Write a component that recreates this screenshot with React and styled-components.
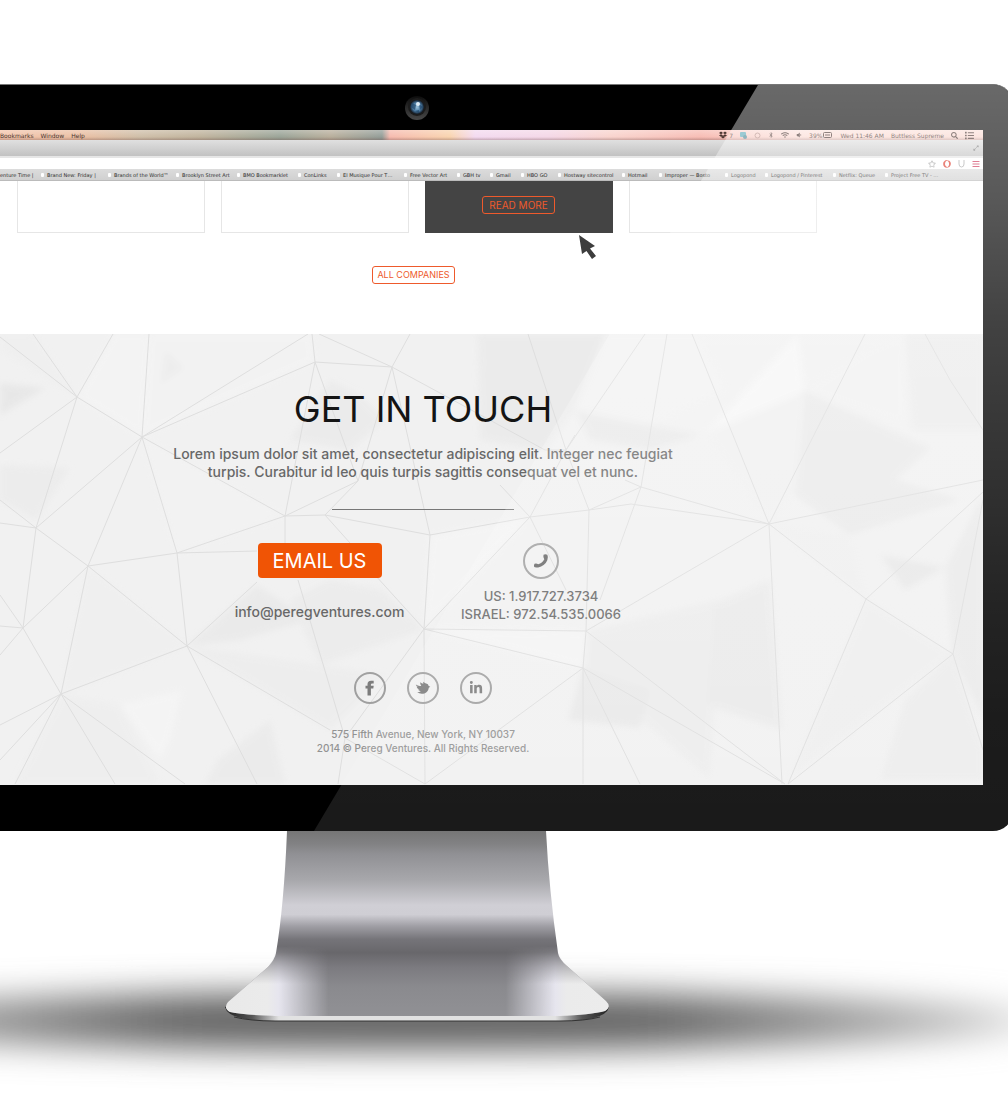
import React from "react";
import styled, { createGlobalStyle, css } from "styled-components";
import { FaLinkedinIn, FaDropbox, FaBluetoothB, FaWifi, FaVolumeDown, FaSearch, FaList, FaRegStar, FaOpera, FaBars, FaExpandAlt } from "react-icons/fa";

const GlobalStyle = createGlobalStyle`
  * { box-sizing: border-box; }
  body { margin: 0; background: #fff; font-family: Inter, "Open Sans", sans-serif; }
  h1, p, ul { margin: 0; padding: 0; }
  button, input { font: inherit; }
`;

const Page = styled.main`
  padding-top: 84px;
  overflow: hidden;
`;

const Scene = styled.div`
  margin: 0 -5px 0 -180px;
`;

const Monitor = styled.div`
  position: relative;
  display: flex;
  flex-direction: column;
  padding: 0 30px 46px;
  background: #000;
  border-radius: 20px;
  border-top: 1px solid #777;
  overflow: hidden;
`;

const Glare = styled.div`
  position: absolute;
  inset: 0;
  pointer-events: none;
  clip-path: polygon(938px 0, 100% 0, 100% 100%, 494px 100%);
  background: linear-gradient(
    rgba(255, 255, 255, 0.41), rgba(255, 255, 255, 0.35) 15%, rgba(255, 255, 255, 0.26) 32%,
    rgba(255, 255, 255, 0.14) 70%, rgba(255, 255, 255, 0.11) 85%, rgba(255, 255, 255, 0.1)
  );
`;

const CameraRow = styled.div`
  display: flex;
  align-items: center;
  justify-content: center;
  height: 45px;
`;

const Screen = styled.div`
  display: flex;
  flex-direction: column;
  background: #fff;
`;

const MenuBar = styled.div`
  display: flex;
  align-items: center;
  justify-content: space-between;
  height: 10px;
  padding: 0 9px 0 150px;
  color: #4a3530;
  font: 6px "DejaVu Sans", sans-serif;
  background:
    linear-gradient(rgba(255, 255, 255, 0.35), rgba(255, 255, 255, 0.1) 70%, rgba(120, 90, 90, 0.35)),
    linear-gradient(90deg, #f2bfa3 150px, #e8b899 230px, #c9b79e 290px, #b9ab92 350px, #8f9a8c 430px, #b0a590 480px,
      #87928c 532px, #f5b3a6 540px, #f8cfa6 600px, #f2d6ee 625px, #f3d3e4 700px, #f8cfc8 760px, #f6b5ac 850px, #fbd5cc 950px, #f8d0c6);
`;

const MenuGroup = styled.div`
  display: flex;
  align-items: center;
  gap: ${(p) => p.$gap}px;
  white-space: nowrap;
  svg { display: block; }
`;

const TitleStrip = styled.div`
  display: flex;
  align-items: center;
  justify-content: flex-end;
  height: 16px;
  padding-right: 4px;
  color: #777;
  background: linear-gradient(#e0e0e0, #c2c2c2);
`;

const AddressBar = styled.div`
  display: flex;
  align-items: center;
  gap: 7px;
  height: 13px;
  padding-right: 3px;
  border-top: 2px solid #e6e6e6;
  background: #fff;
  color: #999;
`;

const Address = styled.input`
  flex: 1;
  min-width: 0;
  height: 10px;
  padding: 0;
  border: 0;
  background: #fff;
`;

const Bookmarks = styled.nav`
  display: grid;
  grid-template-columns: 191px 67px 68px 61px 61px 39px 67px 53px 33px 31px 37px 64px 37px 66px 40px 68px 52px 1fr;
  align-items: center;
  height: 12px;
  border-bottom: 1px solid #bbb;
  background: linear-gradient(#dcdcdc, #d0d0d0);
`;

const Bookmark = styled.a`
  display: flex;
  align-items: center;
  gap: 3px;
  color: #2c2c2c;
  font: 5px "DejaVu Sans", sans-serif;
  white-space: nowrap;
  text-decoration: none;
  &::before {
    content: "";
    width: 3px;
    height: 4px;
    border-radius: 1px;
    background: #fff;
  }
  &:first-child { padding-left: 150px; }
  &:first-child::before { display: none; }
`;

const Companies = styled.section`
  display: flex;
  flex-direction: column;
  align-items: center;
  padding-bottom: 50px;
`;

const CardRow = styled.div`
  display: grid;
  grid-template-columns: repeat(4, 188px);
  gap: 16px;
`;

const Card = styled.div`
  position: relative;
  display: flex;
  align-items: flex-start;
  justify-content: center;
  height: 52px;
  padding-top: 15px;
  border: 1px solid #e6e6e6;
  border-top: 0;
  ${(p) => p.$dark && css`
    background: #444;
    border-color: #444;
  `}
`;

const Pointer = styled.svg`
  position: absolute;
  left: 152px;
  top: 53px;
`;

const OutlineButton = styled.button`
  height: 18px;
  padding: 0 ${(p) => p.$pad}px;
  border: 1px solid #ee5a2c;
  border-radius: 3px;
  background: transparent;
  color: #ee5a2c;
  font-size: ${(p) => p.$size}px;
  line-height: 16px;
  white-space: nowrap;
`;

const AllCompanies = styled.div`
  margin-top: 33px;
  padding-right: 6px;
  display: flex;
`;

const Contact = styled.section`
  position: relative;
  display: flex;
  flex-direction: column;
  align-items: center;
  padding: 53px 0 30px 13px;
  background: #f1f1f1;
  text-align: center;
  color: #686868;
`;

const Backdrop = styled.svg`
  position: absolute;
  inset: 0;
  width: 100%;
  height: 100%;
`;

const Title = styled.h1`
  position: relative;
  color: #141414;
  font-size: 36px;
  font-weight: 400;
  line-height: 44px;
`;

const Lead = styled.p`
  position: relative;
  margin-top: 14px;
  font-size: 14px;
  font-weight: 500;
  line-height: 18px;
`;

const Divider = styled.div`
  position: relative;
  width: 182px;
  height: 1px;
  margin-top: 28px;
  background: #777;
`;

const Channels = styled.div`
  position: relative;
  display: grid;
  grid-template-columns: 167px 162px;
  gap: 57px;
  margin-top: 33px;
  padding-left: 12px;
`;

const Channel = styled.div`
  display: flex;
  flex-direction: column;
  align-items: center;
  gap: ${(p) => p.$gap}px;
  font-size: ${(p) => p.$size}px;
  font-weight: 500;
  line-height: 18px;
  white-space: nowrap;
`;

const EmailButton = styled.button`
  width: 124px;
  height: 35px;
  padding: 0;
  border: 0;
  border-radius: 4px;
  background: #f05405;
  color: #fff;
  font-size: 20px;
  font-weight: 400;
`;

const TextLink = styled.a`
  display: block;
  color: inherit;
  text-decoration: none;
`;

const Ring = styled.a`
  display: flex;
  align-items: center;
  justify-content: center;
  width: ${(p) => p.$size}px;
  height: ${(p) => p.$size}px;
  border: 2px solid #a0a0a0;
  border-radius: 50%;
  color: #7c7c7c;
`;

const Social = styled.nav`
  position: relative;
  display: flex;
  gap: 21px;
  margin-top: 49px;
`;

const Legal = styled.p`
  position: relative;
  margin-top: 23px;
  color: #939393;
  font-size: 10px;
  font-weight: 500;
  line-height: 14px;
`;

const Stand = styled.svg`
  display: block;
  width: 100%;
  height: 278px;
`;

const bookmarks = ["enture Time |", "Brand New: Friday |", "Brands of the World™", "Brooklyn Street Art", "BMO Bookmarklet", "ConLinks", "El Musique Pour T…", "Free Vector Art", "GBH tv", "Gmail", "HBO GO", "Hostway sitecontrol", "Hotmail", "Improper — Bosto", "Logopond", "Logopond / Pinterest", "Netflix: Queue", "Project Free TV - …"];

const facets = [
  ["0,383 45,388 0,415", "#e2e2e2"],
  ["0,334 33,334 77,397 0,350", "#eeeeee"],
  ["0,465 70,468 36,520 0,500", "#e9e9e9"],
  ["113,334 149,334 142,437 77,397", "#f5f5f5"],
  ["149,334 312,334 315,362 142,437", "#f4f4f4"],
  ["165,350 185,368 160,385", "#ececec"],
  ["142,437 285,516 177,553", "#f3f3f3"],
  ["88,566 187,646 61,694", "#eeeeee"],
  ["187,646 257,585 310,620 240,640", "#e6e6e6"],
  ["290,600 330,580 382,590 424,629 320,665", "#e9e9e9"],
  ["187,646 320,665 385,675 330,730", "#ebebeb"],
  ["120,705 182,690 170,740 160,760", "#f7f7f7"],
  ["218,760 270,720 285,784 205,784", "#e8e8e8"],
  ["61,694 120,705 160,784 15,784", "#ededed"],
  ["330,380 360,395 385,420 350,450 290,440", "#e8e8e8"],
  ["478,334 605,334 575,410 545,450 480,440", "#e8e8e8"],
  ["575,410 650,425 700,435 650,450 590,440", "#e5e5e5"],
  ["605,334 700,334 725,390 650,425 575,410", "#f3f3f3"],
  ["798,334 735,402 705,433 804,391", "#fafafa"],
  ["804,391 930,448 895,480 960,500 850,535 795,495", "#e6e6e6"],
  ["804,391 865,350 905,334 905,425", "#f2f2f2"],
  ["905,334 983,334 983,430 912,430", "#e9e9e9"],
  ["705,433 804,391 795,495 769,524", "#f0f0f0"],
  ["769,524 850,535 866,599", "#eeeeee"],
  ["880,555 945,567 905,590", "#e3e3e3"],
  ["945,567 983,495 983,720 953,654", "#e6e6e6"],
  ["586,631 720,600 710,780 583,668", "#eaeaea"],
  ["712,605 770,580 782,730 705,705", "#e7e7e7"],
  ["583,668 650,690 640,728 568,720", "#e4e4e4"],
  ["424,629 586,631 583,668", "#f7f7f7"],
  ["430,535 530,517 424,629", "#f7f7f7"],
  ["866,599 953,654 788,780", "#ededed"],
  ["953,654 905,700 880,780 983,780 983,750", "#e9e9e9"],
];

const strands =
  "M77 397L0 337M77 397L33 334M77 397L113 334M77 397L0 453M77 397L36 528M77 397L142 437" +
  "M142 437L149 334M142 437L308 334M142 437L315 362M142 437L285 516M142 437L36 528M142 437L88 566M142 437L177 553" +
  "M177 553L187 646M177 553L285 516M177 553L257 551M177 553L88 566M36 528L0 500M36 528L0 523M36 528L88 566M36 528L23 628" +
  "M88 566L23 628M88 566L61 694M88 566L187 646M23 628L0 595M23 628L0 655M23 628L0 626M23 628L61 694" +
  "M61 694L187 646M61 694L0 725M61 694L0 760M61 694L15 784M61 694L115 784M61 694L185 784" +
  "M187 646L257 784M187 646L330 730M187 646L257 582M298 580L345 738" +
  "M312 334L315 362L392 367L410 334M319 334L392 367M315 362L358 481M392 367L358 481L285 516L325 515L358 481M315 362L285 516L285 545" +
  "M392 367L430 535M392 367L545 450L566 450M325 515L430 535L424 629M325 515L350 543M430 535L530 517L424 629M375 575L424 629" +
  "M424 629L345 738L338 784M345 738L425 784M424 629L425 784M424 629L586 631M424 629L583 668M583 668L425 784" +
  "M530 517L500 485M530 517L566 450L575 435M530 517L589 510L631 504L769 524M530 517L566 590M589 510L641 487L769 524" +
  "M528 334L566 450L589 510L586 631M645 334L566 450M667 334L641 487L600 600M625 480L641 487M692 334L769 524L865 334" +
  "M769 524L983 480M769 524L586 631L583 668L583 784M769 524L782 784M769 524L866 599L983 492M866 599L953 654L983 500" +
  "M866 599L788 784L953 654L983 750M583 668L640 784M583 668L785 784L586 631M925 334L950 380L983 430";

function PhoneIcon() {
  return (
    <svg width="16" height="16" viewBox="0 0 16 16" aria-hidden="true">
      <path d="M10.500 1.800Q12.300 .8 14.300 1.800Q15.600 4.200 14.300 7.200C12.600 11 9.300 13.700 5.200 14.400Q2.300 14.900 1.200 14.100Q.6 12.300 1.500 10.800Q3.300 9.900 5.200 11.200Q9.300 10.300 11.300 6.200Q9.900 4.200 10.500 1.800Z" fill="#686868" />
    </svg>
  );
}

function FacebookIcon() {
  return (
    <svg width="10" height="16" viewBox="0 0 10 16" aria-hidden="true">
      <path d="M2.500 15.500V8.500H.5V5.800H2.500V4.200Q2.500.7 6 .7H8.700V3.400H7.200Q5.900 3.400 5.900 4.500V5.800H8.700L8.300 8.500H5.900V15.500Z" fill="currentColor" />
    </svg>
  );
}

function BirdIcon() {
  return (
    <svg width="16" height="14" viewBox="0 0 16 14" aria-hidden="true">
      <path d="M.8 3.500Q3.500 5.500 6.300 4.800Q5 3.200 5.200 1.200Q6.600 2.500 8.300 2.700Q8 1.500 8.500.8Q9.800 2.200 11.200 2.600Q13.300 3 13.700 5L15.300 5.800L13.800 6.800Q13.300 10.500 10 12.200Q5.500 13.700 2.200 11.300Q4.500 11.300 5.800 10.200Q3.600 10 3 8.600H4.500Q2.100 7.600 1.600 5.700L2.900 6Q1.200 5.200.8 3.500Z" fill="currentColor" />
    </svg>
  );
}

function ContactChannels() {
  return (
    <Channels>
      <Channel $gap={25} $size={14}>
        <EmailButton type="button">EMAIL US</EmailButton>
        <TextLink href="mailto:info@peregventures.com">info@peregventures.com</TextLink>
      </Channel>
      <Channel $gap={8} $size={13}>
        <Ring $size={36} href="tel:19177273734" aria-label="Call us">
          <PhoneIcon />
        </Ring>
        <div>
          <TextLink href="tel:19177273734">US: 1.917.727.3734</TextLink>
          <TextLink href="tel:972545350066">ISRAEL: 972.54.535.0066</TextLink>
        </div>
      </Channel>
    </Channels>
  );
}

function Camera() {
  return (
    <svg width="26" height="26" viewBox="0 0 26 26" aria-hidden="true">
      <defs>
        <radialGradient id="lens">
          <stop offset="0" stopColor="#9cc4de" />
          <stop offset="0.6" stopColor="#4d7da5" />
          <stop offset="1" stopColor="#14202e" />
        </radialGradient>
        <linearGradient id="rim" x1="0" y1="0" x2="0" y2="1">
          <stop offset="0" stopColor="#0c0c0c" />
          <stop offset="1" stopColor="#484848" />
        </linearGradient>
      </defs>
      <circle cx="13" cy="13" r="12" fill="url(#rim)" />
      <circle cx="13" cy="12" r="9" fill="#1c1c1c" />
      <circle cx="13" cy="12" r="7" fill="url(#lens)" />
      <path d="M8 8l4 2-1 5-4-3zM15 9l4 3-3 3zM11 16l4-1 0 3z" fill="#1f4468" opacity=".7" />
      <circle cx="14" cy="9" r="2" fill="#dceaf5" />
    </svg>
  );
}

function MonitorStand() {
  return (
    <Stand viewBox="-180 831 1193 278" preserveAspectRatio="xMidYMin slice" aria-hidden="true">
      <defs>
        <linearGradient id="metal" gradientUnits="userSpaceOnUse" x1="0" y1="831" x2="0" y2="1021">
          <stop offset="0" stopColor="#767676" />
          <stop offset="0.07" stopColor="#828284" />
          <stop offset="0.12" stopColor="#909094" />
          <stop offset="0.26" stopColor="#a8a8ac" />
          <stop offset="0.39" stopColor="#d0cfd5" />
          <stop offset="0.44" stopColor="#cfced4" />
          <stop offset="0.5" stopColor="#a09fa5" />
          <stop offset="0.57" stopColor="#757479" />
          <stop offset="0.64" stopColor="#68676b" />
          <stop offset="0.72" stopColor="#7c7b80" />
          <stop offset="0.82" stopColor="#8a8a8e" />
          <stop offset="1" stopColor="#929296" />
        </linearGradient>
        <linearGradient id="flare" gradientUnits="userSpaceOnUse" x1="225" y1="0" x2="609" y2="0">
          <stop offset="0" stopColor="#e9e9e9" />
          <stop offset="0.11" stopColor="#ebebeb" />
          <stop offset="0.14" stopColor="#e6e5ee" />
          <stop offset="0.27" stopColor="#e6e5ee" stopOpacity="0" />
          <stop offset="0.73" stopColor="#e6e5ee" stopOpacity="0" />
          <stop offset="0.86" stopColor="#e6e5ee" />
          <stop offset="0.89" stopColor="#ebebeb" />
          <stop offset="1" stopColor="#ececec" />
        </linearGradient>
        <linearGradient id="fade" gradientUnits="userSpaceOnUse" x1="0" y1="946" x2="0" y2="984">
          <stop offset="0" stopColor="#000" />
          <stop offset="1" stopColor="#fff" />
        </linearGradient>
        <mask id="lower" maskUnits="userSpaceOnUse" x="200" y="830" width="430" height="200">
          <rect x="200" y="830" width="430" height="200" fill="url(#fade)" />
        </mask>
        <linearGradient id="lip" gradientUnits="userSpaceOnUse" x1="225" y1="0" x2="609" y2="0">
          <stop offset="0" stopColor="#222" />
          <stop offset="0.07" stopColor="#555" />
          <stop offset="0.14" stopColor="#e2e2e2" />
          <stop offset="0.86" stopColor="#e2e2e2" />
          <stop offset="0.93" stopColor="#555" />
          <stop offset="1" stopColor="#222" />
        </linearGradient>
        <linearGradient id="floor" gradientUnits="userSpaceOnUse" x1="-180" y1="0" x2="1013" y2="0">
          <stop offset="0" stopColor="#bbb" />
          <stop offset="0.3" stopColor="#636363" />
          <stop offset="0.7" stopColor="#636363" />
          <stop offset="1" stopColor="#c4c4c4" />
        </linearGradient>
        <filter id="haze" x="-20%" y="-200%" width="140%" height="500%">
          <feGaussianBlur stdDeviation="30 17" />
        </filter>
      </defs>
      <ellipse cx="416" cy="1021" rx="620" ry="29" fill="url(#floor)" filter="url(#haze)" />
      <path d="M225 1007Q228 1021 275 1021H560Q606 1021 609 1007L590 1000H245Z" fill="url(#lip)" />
      <path d="M234 1017Q250 1021 275 1021H560Q585 1021 600 1017" fill="none" stroke="#333" />
      <path d="M287 831Q284 905 276 953Q275 959 268 967L228 1002Q223 1008 230 1012Q245 1015 275 1016H560Q590 1015 605 1011Q612 1007 606 1001L567 966Q559 959 558 953Q549 890 546 831Z" fill="url(#metal)" />
      <g mask="url(#lower)">
        <path d="M276 945Q275 959 268 967L228 1002Q223 1008 230 1012Q245 1015 275 1016H560Q590 1015 605 1011Q612 1007 606 1001L567 966Q559 959 557 945Z" fill="url(#flare)" />
      </g>
    </Stand>
  );
}

export default function App() {
  return (
    <>
      <GlobalStyle />
      <Page>
        <Scene>
          <Monitor>
            <CameraRow><Camera /></CameraRow>
            <Screen>
              <MenuBar>
                <MenuGroup $gap={7}>
                  <span>Bookmarks</span>
                  <span>Window</span>
                  <span>Help</span>
                </MenuGroup>
                <MenuGroup $gap={7}>
                  <MenuGroup $gap={2}><FaDropbox size={8} /><span>7</span></MenuGroup>
                  <svg width="7" height="7" viewBox="0 0 7 7"><rect width="6" height="5" rx="1" fill="#5fa9b8" /><circle cx="5" cy="5" r="2" fill="#4b8896" /></svg>
                  <svg width="7" height="7" viewBox="0 0 7 7"><circle cx="3.5" cy="3.5" r="2.5" fill="none" stroke="#b98f88" /></svg>
                  <FaBluetoothB size={6} />
                  <FaWifi size={8} />
                  <FaVolumeDown size={6} />
                  <MenuGroup $gap={1}>
                    <span>39%</span>
                    <svg width="10" height="6" viewBox="0 0 10 6"><rect x=".5" y=".5" width="8" height="5" rx="1" fill="none" stroke="#4a3530" /><path d="M2 3h5" stroke="#4a3530" /></svg>
                  </MenuGroup>
                  <span>Wed 11:46 AM</span>
                  <span>Buttless Supreme</span>
                  <FaSearch size={7} />
                  <FaList size={9} />
                </MenuGroup>
              </MenuBar>
              <TitleStrip><FaExpandAlt size={6} /></TitleStrip>
              <AddressBar>
                <Address type="text" aria-label="Address" />
                <FaRegStar size={8} />
                <FaOpera size={8} color="#dd3b2c" />
                <svg width="7" height="8" viewBox="0 0 7 8"><path d="M1 0v4q0 3 2.5 3T6 4V0" fill="none" stroke="#aaa" /></svg>
                <FaBars size={8} color="#cc3355" />
              </AddressBar>
              <Bookmarks aria-label="Bookmarks">
                {bookmarks.map((name) => <Bookmark key={name} href="#">{name}</Bookmark>)}
              </Bookmarks>
              <Companies>
                <CardRow>
                  <Card />
                  <Card />
                  <Card $dark>
                    <OutlineButton type="button" $size={10} $pad={6}>READ MORE</OutlineButton>
                    <Pointer width="20" height="26" viewBox="0 0 20 26" aria-hidden="true">
                      <path d="M1 1L17 12L12 14.500L18 22L14 25L8.500 17L4 20Z" fill="#3d3d3d" />
                    </Pointer>
                  </Card>
                  <Card />
                </CardRow>
                <AllCompanies>
                  <OutlineButton type="button" $size={9} $pad={4}>ALL COMPANIES</OutlineButton>
                </AllCompanies>
              </Companies>
              <Contact>
                <Backdrop viewBox="-150 334 1133 451" preserveAspectRatio="xMidYMid slice" aria-hidden="true">
                  <defs>
                    <filter id="soft"><feGaussianBlur stdDeviation="3" /></filter>
                  </defs>
                  <g filter="url(#soft)" opacity="0.6">
                    {facets.map(([points, fill]) => <polygon key={points} points={points} fill={fill} />)}
                  </g>
                  <path d={strands} fill="none" stroke="#dedede" />
                </Backdrop>
                <Title>GET IN TOUCH</Title>
                <Lead>
                  Lorem ipsum dolor sit amet, consectetur adipiscing elit. Integer nec feugiat
                  <br />
                  turpis. Curabitur id leo quis turpis sagittis consequat vel et nunc.
                </Lead>
                <Divider />
                <ContactChannels />
                <Social aria-label="Social media">
                  <Ring $size={32} href="#" aria-label="Facebook"><FacebookIcon /></Ring>
                  <Ring $size={32} href="#" aria-label="Twitter"><BirdIcon /></Ring>
                  <Ring $size={32} href="#" aria-label="LinkedIn"><FaLinkedinIn size={14} /></Ring>
                </Social>
                <Legal>
                  575 Fifth Avenue, New York, NY 10037
                  <br />
                  2014 © Pereg Ventures. All Rights Reserved.
                </Legal>
              </Contact>
            </Screen>
            <Glare />
          </Monitor>
          <MonitorStand />
        </Scene>
      </Page>
    </>
  );
}
